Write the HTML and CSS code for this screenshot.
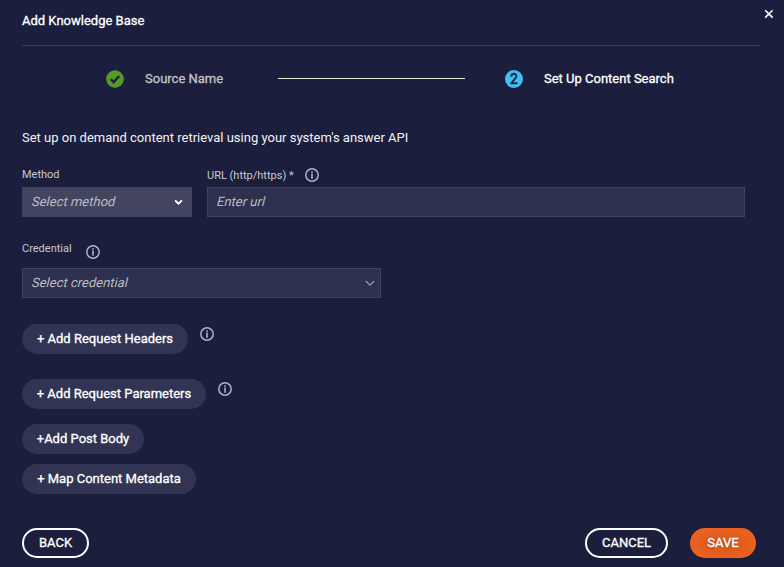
FILE: index.html
```html
<!DOCTYPE html>
<html lang="en">
<head>
<meta charset="utf-8">
<title>Add Knowledge Base</title>
<link rel="stylesheet" href="styles.css">
</head>
<body>
<svg class="defs" width="0" height="0">
  <symbol id="info" viewBox="0 0 14 14">
    <circle cx="7" cy="7" r="6.2" fill="none" stroke="currentColor" stroke-width="1.5"/>
    <path d="M7 3.2v1.5M7 5.6v5.2" fill="none" stroke="currentColor" stroke-width="1.6"/>
  </symbol>
</svg>
<main class="dialog">
  <header class="header">
    <h1 class="title">Add Knowledge Base</h1>
    <button class="close" aria-label="Close"><svg width="10" height="10" viewBox="0 0 10 10"><path d="M1.2 1.2l7.4 7.4M8.6 1.2L1.2 8.6" stroke="#fff" stroke-width="1.6"/></svg></button>
  </header>
  <div class="steps">
    <svg class="badge" width="18" height="18" viewBox="0 0 18 18"><circle cx="9" cy="9" r="9" fill="#549a27"/><path d="M4.7 9.1l3 3 5.5-6" fill="none" stroke="#1b1e3d" stroke-width="2.3"/></svg>
    <span class="step-name done">Source Name</span>
    <span class="connector"></span>
    <span class="badge current">2</span>
    <span class="step-name active">Set Up Content Search</span>
  </div>
  <p class="intro">Set up on demand content retrieval using your system's answer API</p>
  <div class="row">
    <div class="field method">
      <div class="label"><span>Method</span></div>
      <div class="input filled"><span class="placeholder">Select method</span><svg width="9" height="7" viewBox="0 0 9 7"><path d="M1.1 1.3l3.4 3.4 3.4-3.4" fill="none" stroke="#fff" stroke-width="1.9"/></svg></div>
    </div>
    <div class="field url">
      <div class="label url-label"><span>URL (http/https) *</span><svg class="info"><use href="#info"/></svg></div>
      <div class="input"><span class="placeholder">Enter url</span></div>
    </div>
  </div>
  <div class="field credential">
    <div class="label credential-label"><span>Credential</span><svg class="info"><use href="#info"/></svg></div>
    <div class="input"><span class="placeholder">Select credential</span><svg width="10" height="7" viewBox="0 0 10 7"><path d="M.8 1l4.2 4 4.2-4" fill="none" stroke="#96979e" stroke-width="1.3"/></svg></div>
  </div>
  <div class="actions">
    <div class="action headers"><button class="pill">+ Add Request Headers</button><svg class="info"><use href="#info"/></svg></div>
    <div class="action parameters"><button class="pill">+ Add Request Parameters</button><svg class="info"><use href="#info"/></svg></div>
    <div class="action body"><button class="pill">+Add Post Body</button></div>
    <div class="action metadata"><button class="pill">+ Map Content Metadata</button></div>
  </div>
  <footer class="footer">
    <button class="button back">BACK</button>
    <button class="button cancel">CANCEL</button>
    <button class="button save">SAVE</button>
  </footer>
</main>
</body>
</html>
```
FILE: styles.css
```css
* { box-sizing: border-box; }
body { margin: 0; background: #1b1e3d; color: #fff; font: 13px/16px Roboto, sans-serif; }
button { font: inherit; color: inherit; border: 0; padding: 0; background: none; white-space: nowrap; }
svg { flex: none; display: block; }
.defs { position: absolute; }
.dialog { width: 784px; height: 567px; padding-left: 22px; overflow: hidden; }
.title, .step-name, .pill, .button { font-weight: 400; -webkit-text-stroke: .3px currentColor; }
.header { height: 46px; width: 738px; border-bottom: 1px solid #393b5a; display: flex; justify-content: space-between; padding-top: 9px; }
.title { margin: 4px 0 0; font-size: 13px; line-height: 16px; }
.close { height: 10px; margin-right: -14px; }
.steps { display: flex; align-items: center; height: 18px; margin: 24px 0 0 84px; }
.badge { width: 18px; height: 18px; border-radius: 50%; }
.current { background: #40bdf2; color: #1b1e3d; text-align: center; font-size: 14px; line-height: 18px; font-weight: 500; -webkit-text-stroke: .3px currentColor; }
.step-name { white-space: nowrap; }
.done { color: #c3c3c6; width: 133px; margin-left: 21px; }
.connector { width: 187px; height: 1px; margin: 0 40px 1px 0; background: #e5e7d5; }
.active { margin-left: 21px; }
.intro { margin: 42px 0 0; white-space: nowrap; line-height: 16px; color: #f2f2f5; }
.row { display: flex; gap: 15px; margin-top: 21px; }
.method { width: 170px; }
.url { width: 538px; }
.label { display: flex; height: 20px; padding-top: 1px; font-size: 11px; line-height: 14px; color: #c8c9d0; white-space: nowrap; }
.url-label { line-height: 16px; }
.url-label .info { margin: 0 0 0 11px; }
.info { width: 14px; height: 14px; color: #aab3d0; }
.input { height: 30px; display: flex; align-items: center; justify-content: space-between; border: 1px solid #404260; background: #2d304e; padding: 0 5px 0 9px; color: #bdbdc0; }
.placeholder { transform: skewX(-14deg); }
.filled { background: #424460; padding-right: 8px; }
.credential { width: 359px; margin-top: 24px; }
.credential-label { height: 27px; }
.credential-label .info { margin: 3px 0 0 14px; }
.actions { padding-top: 26px; }
.action { display: flex; height: 30px; margin-bottom: 10px; }
.headers { margin-bottom: 25px; }
.parameters { margin-bottom: 15px; }
.action .info { margin: 3px 0 0 12px; }
.pill { height: 30px; border-radius: 15px; background: #313452; }
.headers .pill { width: 166px; }
.parameters .pill { width: 184px; }
.body .pill { width: 122px; }
.metadata .pill { width: 174px; }
.footer { display: flex; margin-top: 34px; }
.button { height: 30px; border: 2px solid #fff; border-radius: 15px; }
.back { width: 67px; }
.cancel { width: 83px; margin-left: 496px; }
.save { width: 66px; margin-left: 22px; border: 0; background: radial-gradient(ellipse at center, #d9571d 0%, #eb611f 70%); text-shadow: 0 1px 3px #8c513b; }
```
